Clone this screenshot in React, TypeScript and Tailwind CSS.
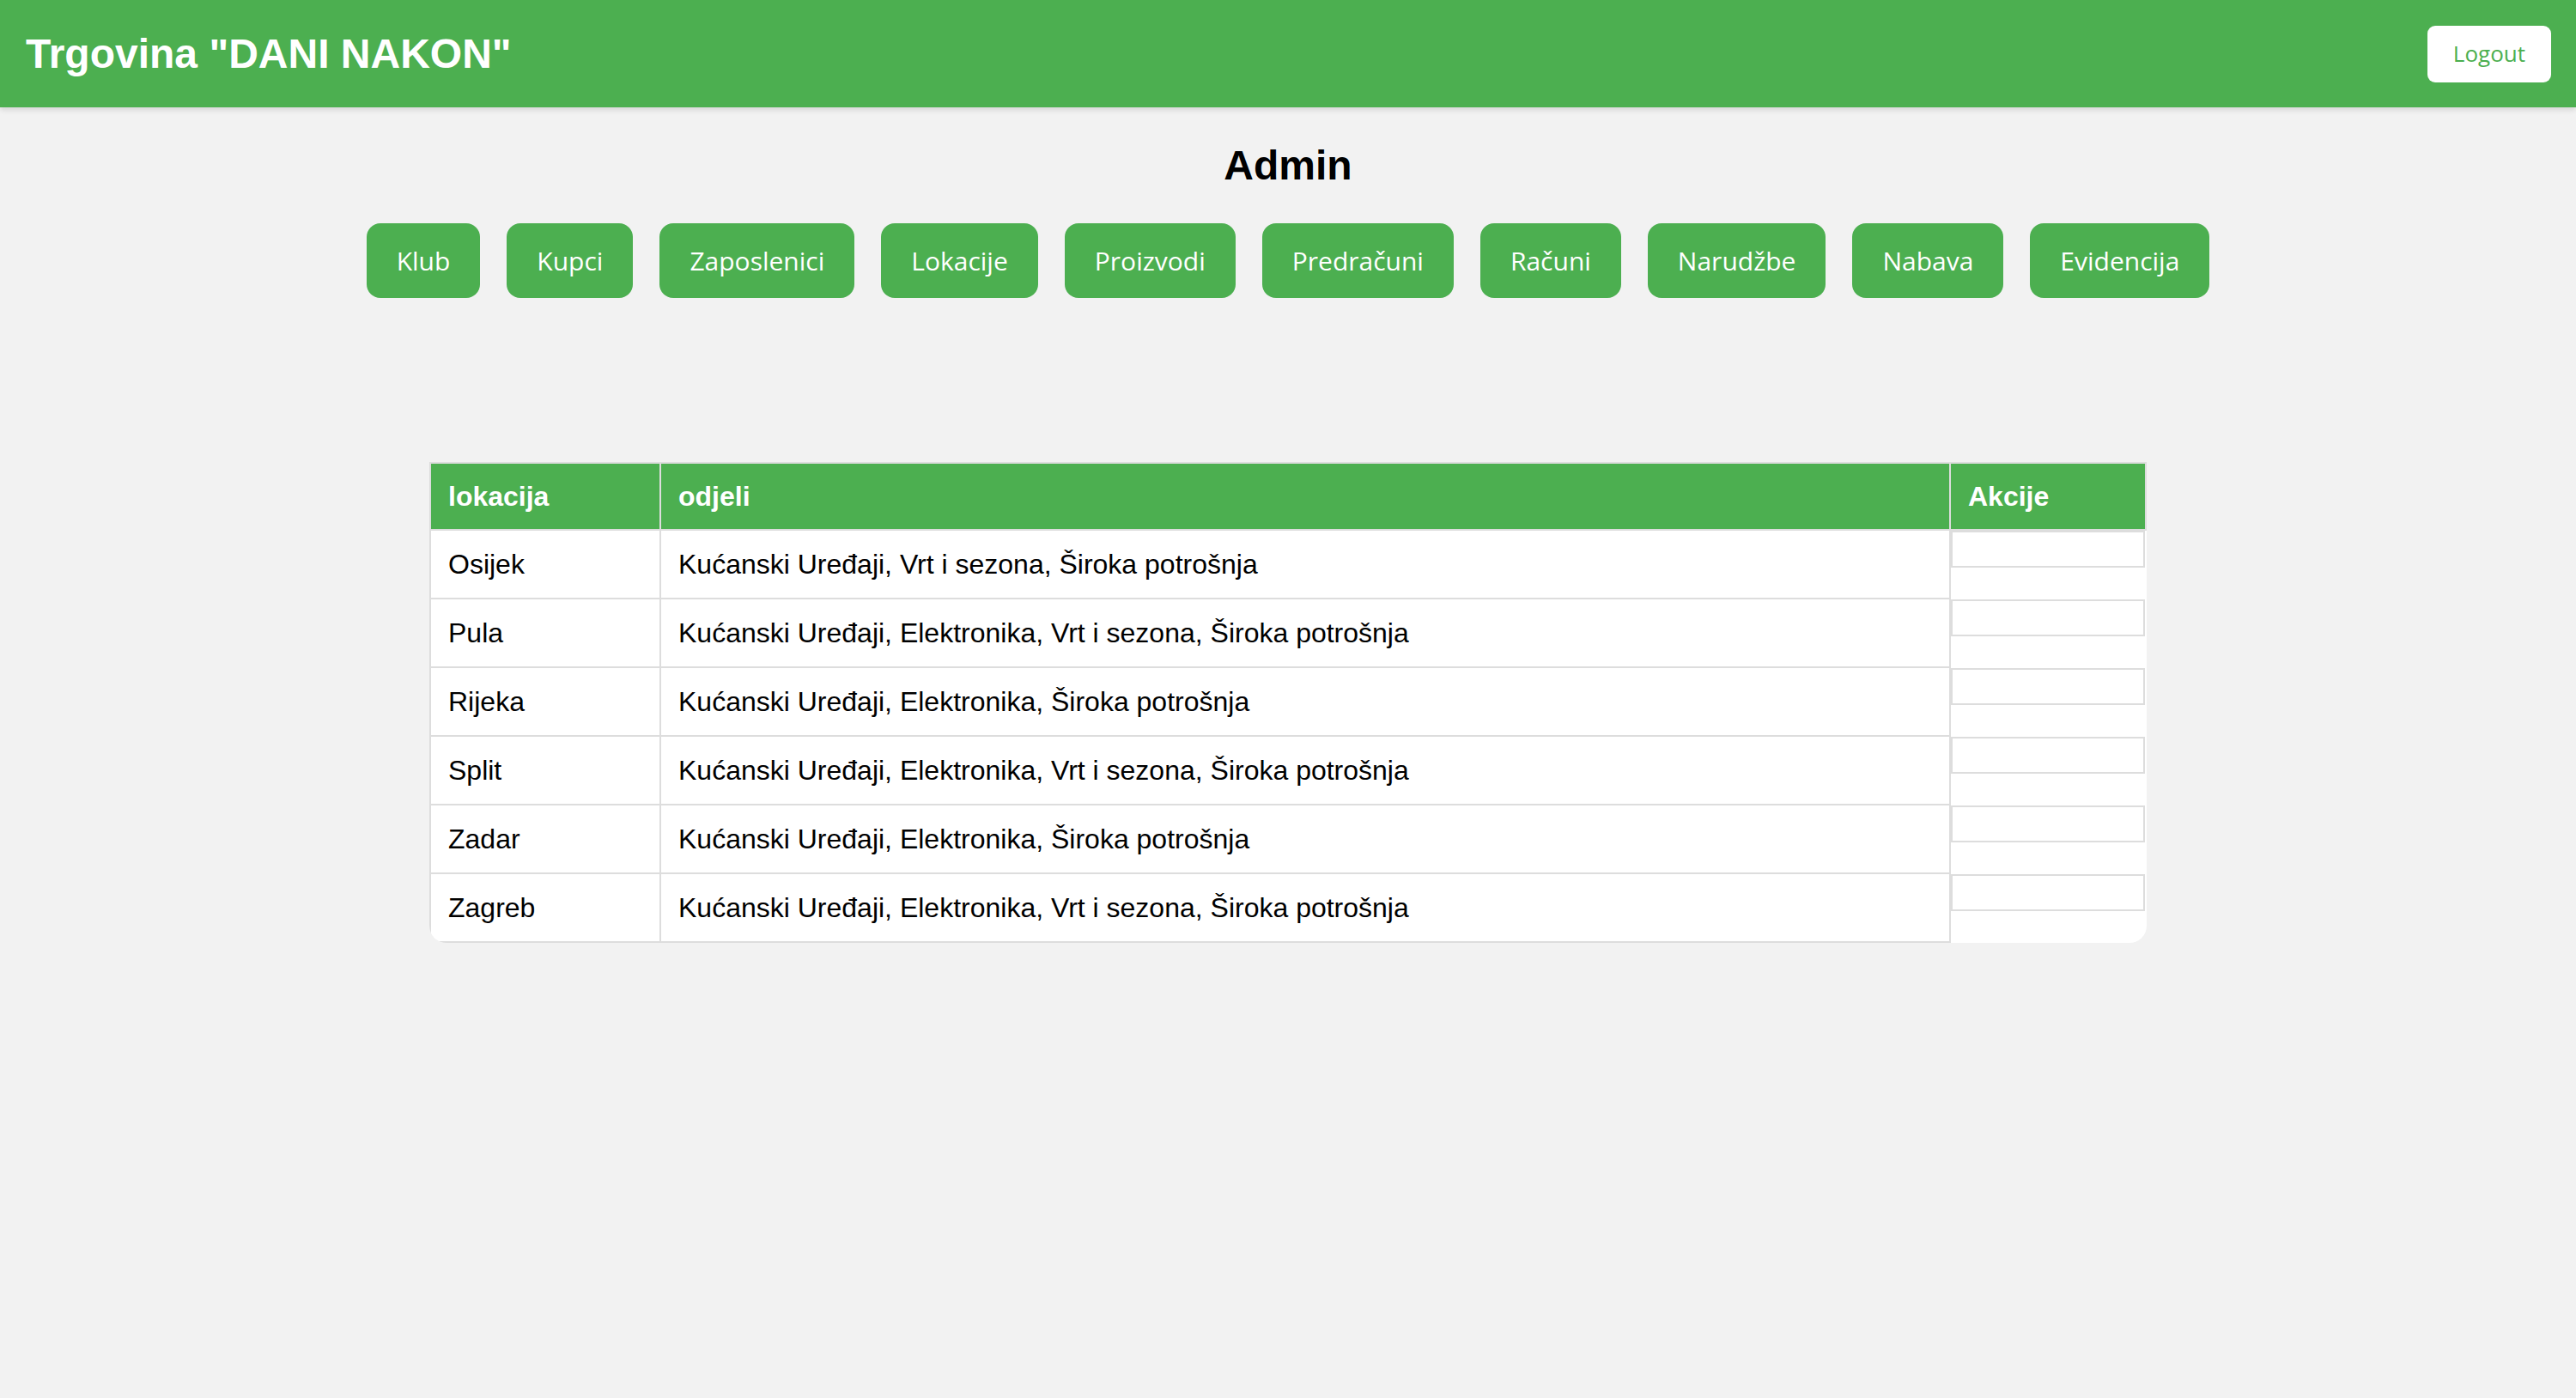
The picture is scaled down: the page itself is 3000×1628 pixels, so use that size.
import React from 'react';

const navItems = ['Klub', 'Kupci', 'Zaposlenici', 'Lokacije', 'Proizvodi', 'Predračuni', 'Računi', 'Narudžbe', 'Nabava', 'Evidencija'];

const locations = [
  { name: 'Osijek', odjeli: 'Kućanski Uređaji, Vrt i sezona, Široka potrošnja' },
  { name: 'Pula', odjeli: 'Kućanski Uređaji, Elektronika, Vrt i sezona, Široka potrošnja' },
  { name: 'Rijeka', odjeli: 'Kućanski Uređaji, Elektronika, Široka potrošnja' },
  { name: 'Split', odjeli: 'Kućanski Uređaji, Elektronika, Vrt i sezona, Široka potrošnja' },
  { name: 'Zadar', odjeli: 'Kućanski Uređaji, Elektronika, Široka potrošnja' },
  { name: 'Zagreb', odjeli: 'Kućanski Uređaji, Elektronika, Vrt i sezona, Široka potrošnja' },
];

export default function App() {
  return (
    <div className="min-h-screen bg-[#f2f2f2] font-['Liberation_Sans',Arial,sans-serif] text-black">
      {/* Header */}
      <header className="h-[125px] bg-[#4CAF50] px-[30px] flex items-center justify-between shadow-[0_3px_6px_rgba(0,0,0,0.12)]">
        <h1 className="text-white font-bold text-[48px] leading-[55px]">Trgovina "DANI NAKON"</h1>
        <button className="h-[66px] px-[30px] mr-[-1px] bg-white rounded-[9px] text-[#4CAF50] text-[26px] font-['Open_Sans',sans-serif]">
          Logout
        </button>
      </header>

      {/* Content */}
      <main className="pt-[40px] flex flex-col items-center">
        <h2 className="font-bold text-[48px] leading-[55px]">Admin</h2>

        <nav className="mt-[40px] flex gap-[31px]">
          {navItems.map(item => (
            <button
              key={item}
              className="h-[87px] px-[35px] bg-[#4CAF50] rounded-[16px] text-white text-[30px] font-['Open_Sans',sans-serif] flex items-center"
            >
              {item}
            </button>
          ))}
        </nav>

        <div className="mt-[191px] w-[2000px] rounded-b-[20px] overflow-hidden bg-white text-[32px] leading-[37px]">
          <div className="grid grid-cols-[270px_1502px_228px]">
            <div className="h-[80px] bg-[#4CAF50] border-2 border-[#ddd] px-[20px] flex items-center font-bold text-white">lokacija</div>
            <div className="h-[80px] bg-[#4CAF50] border-y-2 border-r-2 border-[#ddd] px-[20px] flex items-center font-bold text-white">odjeli</div>
            <div className="h-[80px] bg-[#4CAF50] border-y-2 border-r-2 border-[#ddd] px-[20px] flex items-center font-bold text-white">Akcije</div>

            {locations.map(loc => (
              <React.Fragment key={loc.name}>
                <div className="h-[80px] border-x-2 border-b-2 border-[#ddd] px-[20px] flex items-center">{loc.name}</div>
                <div className="h-[80px] border-r-2 border-b-2 border-[#ddd] px-[20px] flex items-center">{loc.odjeli}</div>
                <div className="h-[80px]">
                  <div className="h-[43px] mr-[2px] border-2 border-[#ddd]" />
                </div>
              </React.Fragment>
            ))}
          </div>
        </div>
      </main>
    </div>
  );
}
